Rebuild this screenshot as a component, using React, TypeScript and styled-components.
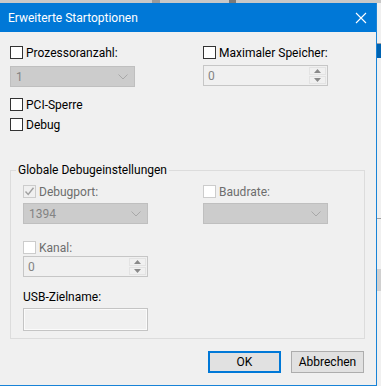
import React from 'react';
import styled, { createGlobalStyle } from 'styled-components';

const GlobalStyle = createGlobalStyle`
  html, body {
    margin: 0;
    padding: 0;
    background: #f0f0f0;
  }
  body {
    font-family: Roboto, "Liberation Sans", Arial, sans-serif;
    font-size: 12px;
    color: #000;
  }
`;

const Screen = styled.div`
  width: 381px;
  height: 386px;
  overflow: hidden;
  display: flex;
  flex-direction: column;
  background: #d4d4d4;
`;

const TopStrip = styled.div`
  height: 3px;
  flex: none;
  background: linear-gradient(90deg, #c8c8c8 0 40%, #9a9a9a 40% 42%, #c8c8c8 42% 60%, #7a7a7a 60% 62%, #c8c8c8 62%);
`;

const Row = styled.div`
  display: flex;
  flex: 1;
`;

const Dialog = styled.div`
  width: 376px;
  flex: none;
  display: flex;
  flex-direction: column;
  background: #f0f0f0;
  border-right: 1px solid #1883d7;
  border-bottom: 1px solid #1883d7;
`;

const Behind = styled.div`
  flex: 1;
  display: flex;
  flex-direction: column;
  background: #f0f0f0;
`;

const Band = styled.div<{ $h: number; $c: string }>`
  height: ${p => p.$h}px;
  flex: none;
  background: ${p => p.$c};
`;

const TitleBar = styled.div`
  height: 29px;
  flex: none;
  background: #0078d7;
  display: flex;
  align-items: center;
  justify-content: space-between;
  padding: 0 9px 0 8px;
  color: #fff;
  font-size: 12px;
`;

const Body = styled.div`
  flex: 1;
  display: flex;
  flex-direction: column;
  padding: 14px 11px 0 10px;
`;

const Grid = styled.div`
  display: grid;
  grid-template-columns: var(--left, 193px) 1fr;
  align-items: start;
`;

const Col = styled.div`
  display: flex;
  flex-direction: column;
`;

const CheckRow = styled.label<{ $top?: number; $disabled?: boolean }>`
  display: flex;
  align-items: center;
  gap: 3px;
  height: 13px;
  margin-top: ${p => p.$top ?? 0}px;
  color: ${p => (p.$disabled ? '#6d6d6d' : '#000')};
  white-space: nowrap;
`;

const Box = styled.span<{ $disabled?: boolean; $checked?: boolean }>`
  width: 13px;
  height: 13px;
  box-sizing: border-box;
  flex: none;
  border: 1px solid ${p => (p.$disabled ? '#cccccc' : '#333333')};
  background: ${p => (p.$checked ? '#f0f0f0' : '#fff')};
  display: flex;
  align-items: center;
  justify-content: center;
`;

const Combo = styled.div<{ $top?: number }>`
  width: 125px;
  height: 21px;
  box-sizing: border-box;
  margin-top: ${p => p.$top ?? 0}px;
  background: #cccccc;
  border: 1px solid #bfbfbf;
  display: flex;
  align-items: center;
  justify-content: space-between;
  padding: 0 6px 0 5px;
  color: #838383;
`;

const Spin = styled.div<{ $top?: number }>`
  width: 125px;
  height: 21px;
  box-sizing: border-box;
  margin-top: ${p => p.$top ?? 0}px;
  background: #f0f0f0;
  border: 1px solid #c6c6c6;
  display: flex;
  align-items: stretch;
  color: #838383;
`;

const SpinText = styled.div`
  flex: 1;
  display: flex;
  align-items: center;
  padding-left: 4px;
`;

const SpinButtons = styled.div`
  width: 17px;
  display: flex;
  flex-direction: column;
  gap: 1px;
  padding: 1px 1px 1px 0;
`;

const SpinButton = styled.div`
  flex: 1;
  background: #f0f0f0;
  border: 1px solid #e3e3e3;
  display: flex;
  align-items: center;
  justify-content: center;
`;

const Group = styled.fieldset`
  margin: 32px 0 0 0;
  padding: 8px 0 7px 12px;
  border: 1px solid #dcdcdc;
  min-width: 0;
  --left: 180px;
`;

const Legend = styled.legend`
  padding: 0 2px;
  margin-left: -7px;
  line-height: 14px;
  color: #000;
`;

const FieldLabel = styled.div`
  margin-top: 13px;
  height: 14px;
  line-height: 14px;
`;

const TextBox = styled.div`
  width: 125px;
  height: 23px;
  box-sizing: border-box;
  margin-top: 4px;
  background: #f0f0f0;
  border: 1px solid #c4c4c4;
  box-shadow: inset 0 0 0 1px #fbfbfb;
`;

const Footer = styled.div`
  display: flex;
  justify-content: flex-end;
  gap: 10px;
  margin-top: 12px;
  padding-right: 1px;
`;

const Button = styled.button<{ $primary?: boolean }>`
  width: 73px;
  height: 22px;
  box-sizing: border-box;
  font: inherit;
  color: #000;
  background: #e1e1e1;
  border: ${p => (p.$primary ? '2px solid #0078d7' : '1px solid #adadad')};
  padding: 0;
`;

const Chevron = () => (
  <svg width="10" height="6" viewBox="0 0 10 6">
    <path d="M0.5 0.5 L5 5 L9.5 0.5" fill="none" stroke="#a8a8a8" strokeWidth="1" />
  </svg>
);

const Check = () => (
  <svg width="11" height="11" viewBox="0 0 11 11">
    <path d="M1.5 5.5 L4.2 8.4 L9.5 1.8" fill="none" stroke="#a0a0a0" strokeWidth="1.4" />
  </svg>
);

const Close = () => (
  <svg width="12" height="12" viewBox="0 0 12 12">
    <path d="M1 1 L11 11 M11 1 L1 11" stroke="#fff" strokeWidth="1.1" />
  </svg>
);

const Up = () => (
  <svg width="7" height="4" viewBox="0 0 7 4">
    <path d="M0 4 L3.5 0 L7 4 Z" fill="#8a8a8a" />
  </svg>
);

const Down = () => (
  <svg width="7" height="4" viewBox="0 0 7 4">
    <path d="M0 0 L3.5 4 L7 0 Z" fill="#8a8a8a" />
  </svg>
);

function Checkbox({ label, top, disabled, checked }: { label: string; top?: number; disabled?: boolean; checked?: boolean }) {
  return (
    <CheckRow $top={top} $disabled={disabled}>
      <Box $disabled={disabled} $checked={checked}>
        {checked && <Check />}
      </Box>
      {label}
    </CheckRow>
  );
}

function NumberBox({ value, top }: { value: string; top?: number }) {
  return (
    <Spin $top={top}>
      <SpinText>{value}</SpinText>
      <SpinButtons>
        <SpinButton><Up /></SpinButton>
        <SpinButton><Down /></SpinButton>
      </SpinButtons>
    </Spin>
  );
}

export default function App() {
  return (
    <>
      <GlobalStyle />
      <Screen>
        <TopStrip />
        <Row>
          <Dialog>
            <TitleBar>
              <span>Erweiterte Startoptionen</span>
              <Close />
            </TitleBar>
            <Body>
              <Grid>
                <Col>
                  <Checkbox label="Prozessoranzahl:" />
                  <Combo $top={7}>
                    <span>1</span>
                    <Chevron />
                  </Combo>
                  <Checkbox label="PCI-Sperre" top={11} />
                  <Checkbox label="Debug" top={7} />
                </Col>
                <Col>
                  <Checkbox label="Maximaler Speicher:" />
                  <NumberBox value="0" top={6} />
                </Col>
              </Grid>
              <Group>
                <Legend>Globale Debugeinstellungen</Legend>
                <Grid>
                  <Col>
                    <Checkbox label="Debugport:" disabled checked />
                    <Combo $top={5}>
                      <span>1394</span>
                      <Chevron />
                    </Combo>
                    <Checkbox label="Kanal:" disabled top={17} />
                    <NumberBox value="0" top={2} />
                    <FieldLabel>USB-Zielname:</FieldLabel>
                    <TextBox />
                  </Col>
                  <Col>
                    <Checkbox label="Baudrate:" disabled />
                    <Combo $top={5}>
                      <span />
                      <Chevron />
                    </Combo>
                  </Col>
                </Grid>
              </Group>
              <Footer>
                <Button $primary>OK</Button>
                <Button>Abbrechen</Button>
              </Footer>
            </Body>
          </Dialog>
          <Behind>
            <Band $h={40} $c="#f0f0f0" />
            <Band $h={1} $c="#a0a0a0" />
            <Band $h={14} $c="#0063b1" />
            <Band $h={160} $c="#f0f0f0" />
            <Band $h={1} $c="#a0a0a0" />
            <Band $h={50} $c="#f0f0f0" />
            <Band $h={22} $c="#d0d0d0" />
          </Behind>
        </Row>
      </Screen>
    </>
  );
}
